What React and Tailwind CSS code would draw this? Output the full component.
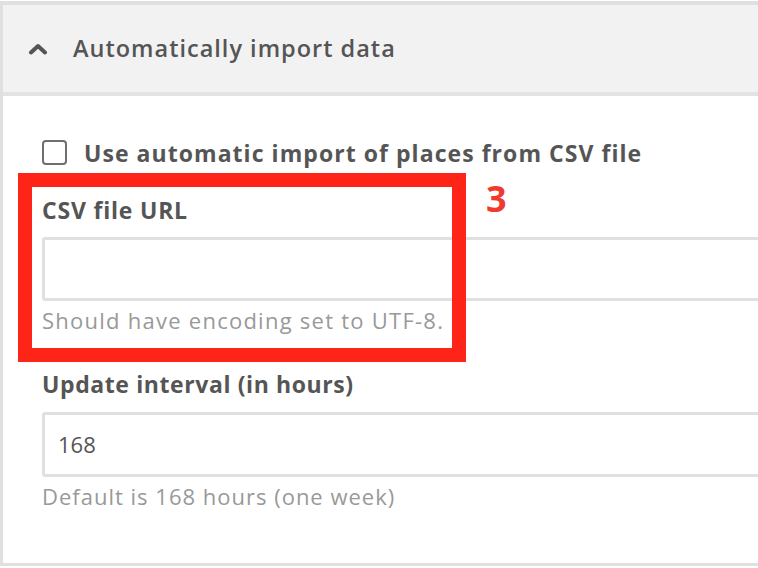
import React from "react";

const font = { fontFamily: '"Open Sans", "Liberation Sans", sans-serif' };

function Chevron() {
  return (
    <svg width="20" height="12" viewBox="0 0 20 12" className="shrink-0">
      <path d="M3 9.5 L10 3 L17 9.5" fill="none" stroke="#555" strokeWidth="4" strokeLinecap="round" strokeLinejoin="round" />
    </svg>
  );
}

export default function App() {
  return (
    <div className="relative h-[568px] w-[758px] overflow-hidden bg-white pt-px" style={font}>
      <div className="w-[820px] border-b-[3px] border-l-[3px] border-t-4 border-[#e0e0e0]">
        {/* шапка секции */}
        <div className="flex h-[91px] items-center gap-[25px] border-b-4 border-[#e3e3e3] bg-[#f2f2f2] pl-[25px]">
          <Chevron />
          <span className="text-[23.5px] font-semibold tracking-[1px] text-[#555]">Automatically import data</span>
        </div>

        <div className="px-[39px] pb-[54px] pt-[44px]">
          <label className="flex h-[25px] items-center gap-[17px]">
            <span className="h-[25px] w-[25px] shrink-0 rounded-[4px] border-2 border-[#6f6f6f] bg-white" />
            <span className="mt-[2px] whitespace-nowrap text-[23px] font-bold leading-none tracking-[1.05px] text-[#555]">
              Use automatic import of places from CSV file
            </span>
          </label>

          <div className="mt-[31px] text-[23px] font-bold leading-[28px] tracking-[0.8px] text-[#555]">CSV file URL</div>
          <div className="mt-[13px] h-[64px] rounded-[3px] border-[3px] border-[#e0e0e0] bg-white" />
          <div className="mt-[6px] text-[22px] leading-[26px] tracking-[1.25px] text-[#999]">Should have encoding set to UTF-8.</div>

          <div className="mt-[37px] text-[23px] font-bold leading-[28px] tracking-[0.6px] text-[#555]">Update interval (in hours)</div>
          <div className="mt-[14px] flex h-[65px] items-center rounded-[3px] border-[3px] border-[#e0e0e0] bg-white pl-[13px] text-[22px] text-[#555]">
            168
          </div>
          <div className="mt-[6px] text-[22px] leading-[26px] tracking-[1px] text-[#999]">Default is 168 hours (one week)</div>
        </div>
      </div>

      {/* красная рамка-аннотация */}
      <div className="absolute left-[18px] top-[173px] h-[189px] w-[448px] border-[14px] border-[#ff2418]" />
      <div className="absolute left-[486px] top-[181px] text-[36px] font-bold leading-none text-[#f03a2f]">3</div>
    </div>
  );
}
